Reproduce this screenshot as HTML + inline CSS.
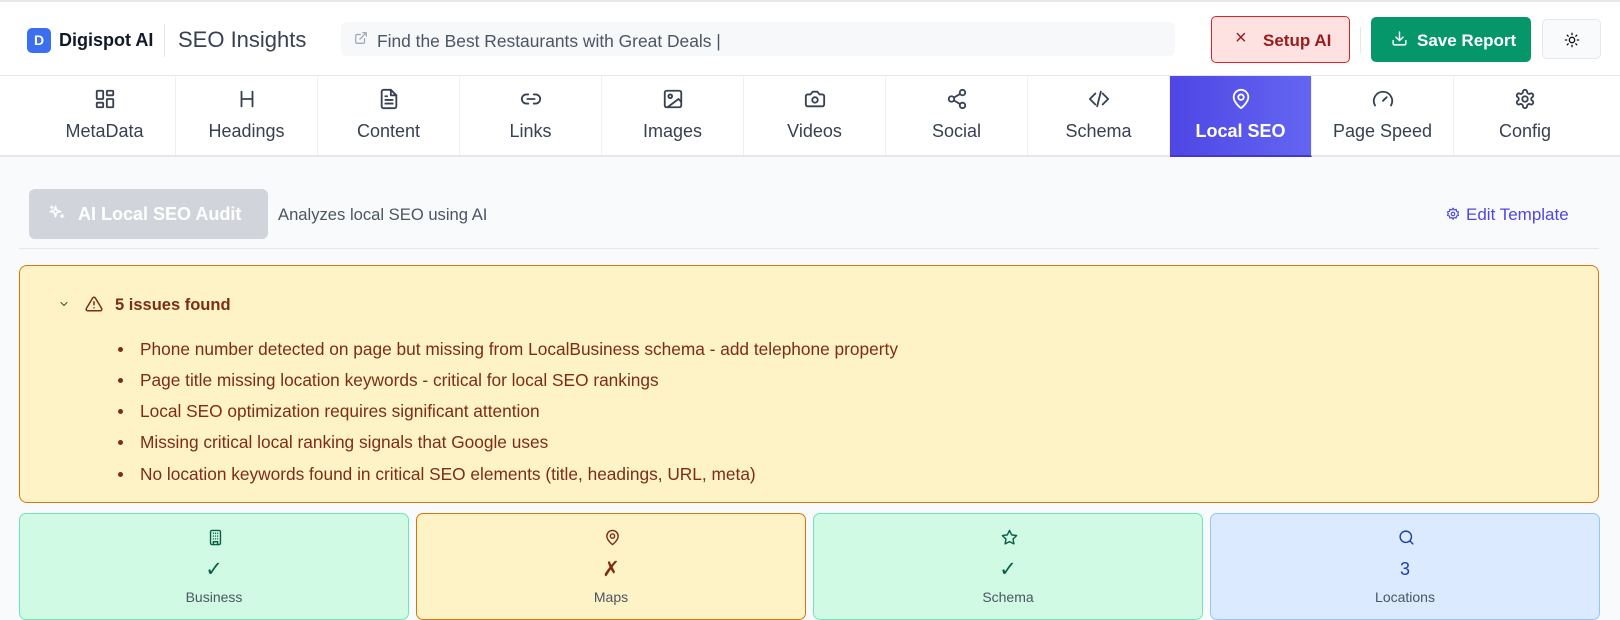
<!DOCTYPE html>
<html><head><meta charset="utf-8"><style>
*{box-sizing:border-box;margin:0;padding:0}
body{width:1620px;height:620px;overflow:hidden;background:#f9fafb;font-family:"Liberation Sans",sans-serif;color:#374151;position:relative}
.abs{position:absolute}
svg{fill:none;stroke:currentColor;stroke-width:2;stroke-linecap:round;stroke-linejoin:round}
.hdr{left:0;top:0;width:1620px;height:76px;background:#fff;border-top:2px solid #e5e7eb;border-bottom:1px solid #e5e7eb}
.tabs{left:0;top:76px;width:1620px;height:81px;background:#fff;border-bottom:2px solid #e5e7eb}
.tab{position:absolute;top:0;width:142px;height:79px;border-right:1px solid #eef0f2;text-align:center;color:#374151;font-size:18px}
.tab svg{position:absolute;left:60px;top:12px;width:22px;height:22px}
.tab span{position:absolute;left:0;right:0;top:45px}
.tab.on{background:linear-gradient(90deg,#4f46e5,#6366f1);color:#fff;height:81px;border-bottom:2px solid #4338ca}
li{list-style:none;position:absolute;left:140px;font-size:17.3px;color:#7c2d12}
li:before{content:"";position:absolute;left:-22px;top:8px;width:5px;height:5px;border-radius:50%;background:#7c2d12}
.card{position:absolute;top:513px;width:390px;height:107px;border-radius:7px;border:1px solid;text-align:center}
.card svg{position:absolute;left:187px;top:15px;width:17px;height:17px}
.card .v{position:absolute;left:0;right:0;top:43px;font-size:21px}
.card .l{position:absolute;left:0;right:0;top:75px;font-size:14px;color:#4b5563}
</style></head><body>
<div class="abs hdr"></div>
<div class="abs" style="left:27px;top:28px;width:24px;height:25px;border-radius:5px;background:#3b6ff0;color:#fff;font-weight:bold;font-size:14px;text-align:center;line-height:25px">D</div>
<div class="abs" style="left:59px;top:30px;font-size:18px;font-weight:bold;color:#111827">Digispot AI</div>
<div class="abs" style="left:164px;top:24px;width:1px;height:33px;background:#e5e7eb"></div>
<div class="abs" style="left:178px;top:27px;font-size:22px;color:#374151">SEO Insights</div>
<div class="abs" style="left:341px;top:22px;width:834px;height:34px;border-radius:6px;background:#f7f8fa"></div>
<svg class="abs" style="left:354px;top:31px;width:14px;height:14px;color:#9ca3af" viewBox="0 0 24 24"><path d="M18 13v6a2 2 0 0 1-2 2H5a2 2 0 0 1-2-2V8a2 2 0 0 1 2-2h6M15 3h6v6M10 14L21 3"/></svg>
<div class="abs" style="left:377px;top:31px;font-size:17.4px;color:#4b5563">Find the Best Restaurants with Great Deals |</div>
<div class="abs" style="left:1211px;top:16px;width:139px;height:47px;border-radius:5px;border:1px solid #dc2626;background:#fee2e2;color:#991b1b;font-size:17px;font-weight:bold"><span style="position:absolute;left:23px;top:10px;font-weight:normal;font-size:20px">×</span><span style="position:absolute;left:51px;top:14px">Setup AI</span></div>
<div class="abs" style="left:1360px;top:27px;width:1px;height:26px;background:#e5e7eb"></div>
<div class="abs" style="left:1371px;top:17px;width:160px;height:45px;border-radius:5px;background:#059669;color:#fff;font-size:17px;font-weight:bold">
<svg style="position:absolute;left:20px;top:13px;width:17px;height:17px" viewBox="0 0 24 24"><path d="M21 15v4a2 2 0 0 1-2 2H5a2 2 0 0 1-2-2v-4M7 10l5 5 5-5M12 15V3"/></svg><span style="position:absolute;left:46px;top:14px">Save Report</span></div>
<div class="abs" style="left:1542px;top:19px;width:59px;height:40px;border-radius:5px;border:1px solid #e5e7eb;background:#f9fafb">
<svg style="position:absolute;left:21px;top:12px;width:16px;height:16px;color:#111" viewBox="0 0 24 24"><circle cx="12" cy="12" r="4"/><path d="M12 2v2M12 20v2M4.9 4.9l1.4 1.4M17.7 17.7l1.4 1.4M2 12h2M20 12h2M4.9 19.1l1.4-1.4M17.7 6.3l1.4-1.4"/></svg></div>

<div class="abs tabs">
<div class="tab" style="left:34px"><svg viewBox="0 0 24 24"><rect x="3" y="3" width="7" height="9" rx="1"/><rect x="14" y="3" width="7" height="5" rx="1"/><rect x="14" y="12" width="7" height="9" rx="1"/><rect x="3" y="16" width="7" height="5" rx="1"/></svg><span>MetaData</span></div>
<div class="tab" style="left:176px"><svg viewBox="0 0 24 24"><path d="M6 4v16M18 4v16M6 12h12"/></svg><span>Headings</span></div>
<div class="tab" style="left:318px"><svg viewBox="0 0 24 24"><path d="M14 2H6a2 2 0 0 0-2 2v16a2 2 0 0 0 2 2h12a2 2 0 0 0 2-2V8z"/><path d="M14 2v6h6M16 13H8M16 17H8M10 9H8"/></svg><span>Content</span></div>
<div class="tab" style="left:460px"><svg viewBox="0 0 24 24"><path d="M9 17H7A5 5 0 0 1 7 7h2M15 7h2a5 5 0 1 1 0 10h-2M8 12h8"/></svg><span>Links</span></div>
<div class="tab" style="left:602px"><svg viewBox="0 0 24 24"><rect x="3" y="3" width="18" height="18" rx="2"/><circle cx="9" cy="9" r="2"/><path d="M21 15l-3-3L6 21"/></svg><span>Images</span></div>
<div class="tab" style="left:744px"><svg viewBox="0 0 24 24"><path d="M14.5 4h-5L7 7H4a2 2 0 0 0-2 2v9a2 2 0 0 0 2 2h16a2 2 0 0 0 2-2V9a2 2 0 0 0-2-2h-3z"/><circle cx="12" cy="13" r="3"/></svg><span>Videos</span></div>
<div class="tab" style="left:886px"><svg viewBox="0 0 24 24"><circle cx="18" cy="5" r="3"/><circle cx="6" cy="12" r="3"/><circle cx="18" cy="19" r="3"/><path d="M8.6 13.5l6.8 4M15.4 6.5l-6.8 4"/></svg><span>Social</span></div>
<div class="tab" style="left:1028px"><svg viewBox="0 0 24 24"><path d="M16 18l6-6-6-6M8 6l-6 6 6 6M14 4l-4 16"/></svg><span>Schema</span></div>
<div class="tab on" style="left:1170px"><svg viewBox="0 0 24 24"><path d="M20 10c0 6-8 12-8 12s-8-6-8-12a8 8 0 0 1 16 0z"/><circle cx="12" cy="10" r="3"/></svg><span style="font-weight:bold">Local SEO</span></div>
<div class="tab" style="left:1312px"><svg viewBox="0 0 24 24"><path d="M12 14l4-4M3.3 19a10 10 0 1 1 17.4 0"/></svg><span>Page Speed</span></div>
<div class="tab" style="left:1454px;border-right:none"><svg viewBox="0 0 24 24"><path d="M12.2 2h-.4a2 2 0 0 0-2 2v.2a2 2 0 0 1-1 1.7l-.4.3a2 2 0 0 1-2 0l-.2-.1a2 2 0 0 0-2.7.7l-.2.4a2 2 0 0 0 .7 2.7l.2.1a2 2 0 0 1 1 1.7v.5a2 2 0 0 1-1 1.7l-.2.1a2 2 0 0 0-.7 2.7l.2.4a2 2 0 0 0 2.7.7l.2-.1a2 2 0 0 1 2 0l.4.3a2 2 0 0 1 1 1.7v.2a2 2 0 0 0 2 2h.4a2 2 0 0 0 2-2v-.2a2 2 0 0 1 1-1.7l.4-.3a2 2 0 0 1 2 0l.2.1a2 2 0 0 0 2.7-.7l.2-.4a2 2 0 0 0-.7-2.7l-.2-.1a2 2 0 0 1-1-1.7v-.5a2 2 0 0 1 1-1.7l.2-.1a2 2 0 0 0 .7-2.7l-.2-.4a2 2 0 0 0-2.7-.7l-.2.1a2 2 0 0 1-2 0l-.4-.3a2 2 0 0 1-1-1.7V4a2 2 0 0 0-2-2z"/><circle cx="12" cy="12" r="3"/></svg><span>Config</span></div>
</div>

<div class="abs" style="left:29px;top:189px;width:239px;height:50px;border-radius:6px;background:#d1d5db;color:#fff;font-size:18px;font-weight:bold">
<svg style="position:absolute;left:19px;top:15px;width:18px;height:18px" viewBox="0 0 24 24"><path d="M10 3l1.5 5.5L17 10l-5.5 1.5L10 17l-1.5-5.5L3 10l5.5-1.5zM19 14v4M17 16h4M5 3v3M3.5 4.5h3"/></svg><span style="position:absolute;left:49px;top:15px">AI Local SEO Audit</span></div>
<div class="abs" style="left:278px;top:205px;font-size:16.6px;color:#4b5563">Analyzes local SEO using AI</div>
<svg class="abs" style="left:1446px;top:207px;width:14px;height:14px;color:#4f46e5" viewBox="0 0 24 24"><circle cx="12" cy="12" r="3"/><path d="M12 2l2 3 3.5-1 .5 3.5 3.5 1-1.5 3 1.5 3-3.5 1-.5 3.5-3.5-1-2 3-2-3-3.5 1-.5-3.5-3.5-1 1.5-3-1.5-3 3.5-1 .5-3.5 3.5 1z"/></svg>
<div class="abs" style="left:1466px;top:205px;font-size:17px;color:#4f46e5">Edit Template</div>
<div class="abs" style="left:19px;top:248px;width:1580px;height:1px;background:#e5e7eb"></div>

<div class="abs" style="left:19px;top:265px;width:1580px;height:238px;border-radius:8px;border:1px solid #d97706;background:#fef3c7"></div>
<svg class="abs" style="left:58px;top:298px;width:12px;height:12px;color:#7c2d12" viewBox="0 0 24 24"><path d="M6 9l6 6 6-6"/></svg>
<svg class="abs" style="left:85px;top:295px;width:18px;height:18px;color:#7c2d12" viewBox="0 0 24 24"><path d="M10.3 3.9L1.8 18a2 2 0 0 0 1.7 3h17a2 2 0 0 0 1.7-3L13.7 3.9a2 2 0 0 0-3.4 0zM12 9v4M12 17h.01"/></svg>
<div class="abs" style="left:115px;top:296px;font-size:16.5px;font-weight:bold;color:#7c2d12">5 issues found</div>
<ul>
<li style="top:339px">Phone number detected on page but missing from LocalBusiness schema - add telephone property</li>
<li style="top:370px">Page title missing location keywords - critical for local SEO rankings</li>
<li style="top:401px">Local SEO optimization requires significant attention</li>
<li style="top:432px">Missing critical local ranking signals that Google uses</li>
<li style="top:464px">No location keywords found in critical SEO elements (title, headings, URL, meta)</li>
</ul>

<div class="card" style="left:19px;background:#d1fae5;border-color:#6ee7b7;color:#065f46"><svg viewBox="0 0 24 24"><rect x="5" y="2" width="14" height="20" rx="2"/><path d="M9 22v-4h6v4M9 6h.01M15 6h.01M9 10h.01M15 10h.01M9 14h.01M15 14h.01M12 6h.01M12 10h.01M12 14h.01"/></svg><div class="v">✓</div><div class="l">Business</div></div>
<div class="card" style="left:416px;background:#fef3c7;border-color:#d97706;color:#7c2d12"><svg viewBox="0 0 24 24"><path d="M20 10c0 6-8 12-8 12s-8-6-8-12a8 8 0 0 1 16 0z"/><circle cx="12" cy="10" r="3"/></svg><div class="v">✗</div><div class="l">Maps</div></div>
<div class="card" style="left:813px;background:#d1fae5;border-color:#6ee7b7;color:#065f46"><svg viewBox="0 0 24 24"><path d="M12 2l3.1 6.3 6.9 1-5 4.9 1.2 6.8L12 17.8 5.8 21l1.2-6.8-5-4.9 6.9-1z"/></svg><div class="v">✓</div><div class="l">Schema</div></div>
<div class="card" style="left:1210px;background:#dbeafe;border-color:#93c5fd;color:#1e40af"><svg viewBox="0 0 24 24"><circle cx="11" cy="11" r="8"/><path d="M21 21l-4.3-4.3"/></svg><div class="v" style="font-size:18px;top:45px">3</div><div class="l">Locations</div></div>
</body></html>
